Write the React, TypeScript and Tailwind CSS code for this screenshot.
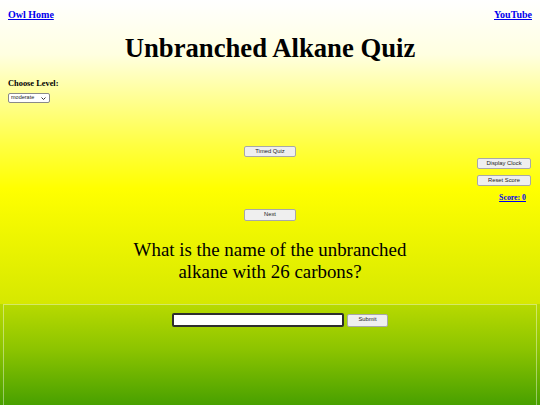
import React, { useState } from 'react'

const btn =
  'bg-[#efefef] border border-[#a8a8a8] rounded-[2px] text-[5.8px] leading-none text-[#222] font-["Liberation_Sans",Arial,sans-serif]'

const App = () => {
  const [level, setLevel] = useState('moderate')
  const [answer, setAnswer] = useState('')

  return (
    <div className='w-[540px] h-[405px] overflow-hidden flex flex-col font-["Liberation_Serif","Times_New_Roman",serif] text-black'>
      {/* top part */}
      <div className="h-[304px] bg-[linear-gradient(to_bottom,#ffffff_0%,#ffffe0_18%,#ffff40_48%,#ffff00_62%,#d6e800_100%)]">
        <div className="flex justify-between px-2 pt-[8px]">
          <a href="#" className="text-[10px] leading-[14px] font-bold text-[#0000ee] underline">Owl Home</a>
          <a href="#" className="text-[10px] leading-[14px] font-bold text-[#0000ee] underline">YouTube</a>
        </div>

        <h1 className="text-center text-[26.7px] leading-[32px] font-bold mt-[10px]">Unbranched Alkane Quiz</h1>

        <div className="px-2 mt-[14px]">
          <p className="text-[8.4px] leading-[12px] font-bold">Choose Level:</p>
          <div className="relative mt-[3px] w-[42px] h-[10px]">
            <select
              value={level}
              onChange={(e) => setLevel(e.target.value)}
              className='block appearance-none w-[42px] h-[10px] text-[5.5px] leading-none bg-white border border-[#8a8a8a] rounded-[2px] pl-[2px] pr-[8px] text-[#222] font-["Liberation_Sans",Arial,sans-serif]'
            >
              <option>easy</option>
              <option>moderate</option>
              <option>hard</option>
            </select>
            <svg className="absolute right-[4px] top-[3.5px] pointer-events-none" width="5" height="3" viewBox="0 0 5 3">
              <path d="M0.5 0.5 L2.5 2.5 L4.5 0.5" fill="none" stroke="#333" strokeWidth="1" />
            </svg>
          </div>
        </div>

        <div className="flex justify-center mt-[43px]">
          <button className={`${btn} w-[52px] h-[11px]`}>Timed Quiz</button>
        </div>

        <div className="flex flex-col items-end pr-[9px] mt-[1px]">
          <button className={`${btn} w-[54px] h-[11px]`}>Display Clock</button>
          <button className={`${btn} w-[54px] h-[11px] mt-[6px]`}>Reset Score</button>
          <a href="#" className="text-[7.8px] leading-[12px] font-bold text-[#0000ee] underline mt-[6px] mr-[5px]">Score: 0</a>
        </div>

        <div className="flex justify-center mt-[5px]">
          <button className={`${btn} w-[52px] h-[12px]`}>Next</button>
        </div>

        <div className="text-center text-[18.9px] leading-[22px] mt-[18px]">
          <p>What is the name of the unbranched</p>
          <p>alkane with 26 carbons?</p>
        </div>
      </div>

      {/* answer area */}
      <div className="flex-1 flex bg-[linear-gradient(to_bottom,#b8da00_0%,#8cc400_45%,#48a000_100%)]">
        <div className="flex-1 mx-[3px] border-t border-x border-white/40">
          <div className="flex justify-center items-center gap-[3px] mt-[8px] pl-[20px]">
            <input
              value={answer}
              onChange={(e) => setAnswer(e.target.value)}
              className="w-[172px] h-[14px] bg-white border-2 border-[#2e2e2e] rounded-[2px] outline-none"
            />
            <button className={`${btn} w-[41px] h-[13px]`}>Submit</button>
          </div>
        </div>
      </div>
    </div>
  )
}

export default App
